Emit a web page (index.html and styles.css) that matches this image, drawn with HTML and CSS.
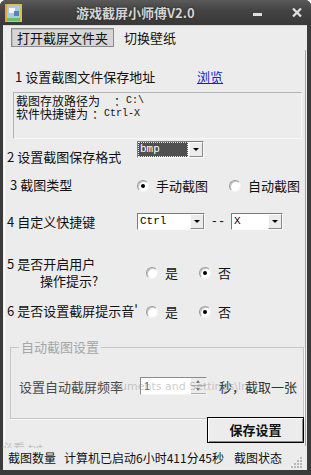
FILE: index.html
```html
<!DOCTYPE html>
<html lang="zh-CN">
<head>
    <meta charset="UTF-8">
    <title>游戏截屏小师傅V2.0</title>
    <link rel="stylesheet" href="styles.css">
</head>
<body>
<div class="window">
    <!-- Title bar -->
    <div class="titlebar">
        <svg class="app-icon" width="17" height="18" viewBox="0 0 17 18">
            <rect x="0" y="0" width="17" height="18" fill="#d9c24a"/>
            <rect x="2" y="2" width="13" height="12" fill="#a9c8e6"/>
            <rect x="4" y="4" width="6" height="5" fill="#f4f4f4"/>
            <rect x="9" y="7" width="5" height="5" fill="#5a7fc0"/>
            <rect x="2" y="14" width="13" height="3" fill="#6cbf5a"/>
            <rect x="0" y="0" width="2" height="18" fill="#e8a23a"/>
        </svg>
        <span class="title">游戏截屏小师傅V2.0</span>
        <span class="btn-min"></span>
        <svg class="btn-close" width="10" height="9" viewBox="0 0 10 9">
            <path d="M1 0.5 L9 8.5 M9 0.5 L1 8.5" stroke="#e2e2e2" stroke-width="2.2"/>
        </svg>
    </div>

    <div class="frame">
        <div class="client">
            <div class="tabs">
                <span class="tab-btn">打开截屏文件夹</span>
                <span class="tab-link">切换壁纸</span>
            </div>

            <div class="panel">
                <div class="row row-1">
                    <span class="label label-1">1 设置截图文件保存地址</span>
                    <a class="browse" href="#">浏览</a>
                </div>

                <div class="info">
                    <div class="info-line">截图存放路径为<span class="gap-3"></span>：<span class="mono">C:\</span></div>
                    <div class="info-line">软件快捷键为<span class="gap-1"></span>：<span class="mono">Ctrl-X</span></div>
                </div>

                <div class="row row-2">
                    <span class="label label-2">2 设置截图保存格式</span>
                    <span class="combo combo-fmt">
                        <span class="combo-value selected">bmp</span>
                        <span class="combo-arrow"></span>
                    </span>
                </div>

                <div class="row row-3">
                    <span class="label label-3">3 截图类型</span>
                    <span class="option"><span class="radio on"></span>手动截图</span>
                    <span class="option option-2"><span class="radio"></span>自动截图</span>
                </div>

                <div class="row row-4">
                    <span class="label label-2">4 自定义快捷键</span>
                    <span class="combo combo-mod">
                        <span class="combo-value">Ctrl</span>
                        <span class="combo-arrow"></span>
                    </span>
                    <span class="dash">--</span>
                    <span class="combo combo-key">
                        <span class="combo-value">X</span>
                        <span class="combo-arrow"></span>
                    </span>
                </div>

                <div class="row row-5">
                    <span class="label label-yn">
                        <span class="line">5 是否开启用户</span>
                        <span class="line line-indent">操作提示?</span>
                    </span>
                    <span class="option"><span class="radio"></span>是</span>
                    <span class="option option-no"><span class="radio on"></span>否</span>
                </div>

                <div class="row row-6">
                    <span class="label label-yn clip">6 是否设置截屏提示音'</span>
                    <span class="option"><span class="radio"></span>是</span>
                    <span class="option option-no"><span class="radio on"></span>否</span>
                </div>

                <fieldset class="group">
                    <legend>自动截图设置</legend>
                    <div class="group-row">
                        <span class="group-label">设置自动截屏频率</span>
                        <span class="spin">
                            <span class="spin-value">1</span>
                            <span class="spin-btns">
                                <span class="spin-up"></span>
                                <span class="spin-down"></span>
                            </span>
                        </span>
                        <span class="group-tail">秒，截取一张</span>
                    </div>
                </fieldset>

                <div class="save-row">
                    <span class="save-btn">保存设置</span>
                </div>
            </div>

            <div class="statusbar">
                <span>截图数量</span>
                <span class="status-time">计算机已启动6小时411分45秒</span>
                <span class="status-state">截图状态</span>
                <svg class="grip" width="12" height="12" viewBox="0 0 12 12">
                    <rect x="9" y="1" width="2" height="2" fill="#b8b8b8"/>
                    <rect x="6" y="4" width="2" height="2" fill="#b8b8b8"/>
                    <rect x="9" y="4" width="2" height="2" fill="#b8b8b8"/>
                    <rect x="3" y="7" width="2" height="2" fill="#b8b8b8"/>
                    <rect x="6" y="7" width="2" height="2" fill="#b8b8b8"/>
                    <rect x="9" y="7" width="2" height="2" fill="#b8b8b8"/>
                    <rect x="0" y="10" width="2" height="2" fill="#b8b8b8"/>
                    <rect x="3" y="10" width="2" height="2" fill="#b8b8b8"/>
                    <rect x="6" y="10" width="2" height="2" fill="#b8b8b8"/>
                    <rect x="9" y="10" width="2" height="2" fill="#b8b8b8"/>
                </svg>
            </div>

            <!-- leftover paint from the desktop behind the window -->
            <span class="ghost ghost-path">uments and Settings\ln</span>
            <span class="ghost ghost-file">必看.txt</span>
        </div>
    </div>
</div>
</body>
</html>
```

FILE: styles.css
```css
body {
    margin: 0;
    font-family: "Noto Sans CJK SC", sans-serif;
    font-size: 13px;
    color: #111;
}

.window {
    width: 311px;
    height: 475px;
    display: flex;
    flex-direction: column;
    background: #3b3b3b;
    border-radius: 6px 6px 0 0;
    overflow: hidden;
}

/* Title bar */
.titlebar {
    height: 25px;
    flex: none;
    display: flex;
    align-items: center;
    background: linear-gradient(#5a5a5a, #444 40%, #383838);
}
.app-icon {
    margin-left: 5px;
}
.title {
    margin-left: 54px;
    font-weight: bold;
    font-size: 13px;
    color: #d4d4d4;
    text-shadow: 0 0 2px #1e1e1e;
    line-height: 16px;
}
.btn-min {
    margin-left: auto;
    width: 9px;
    height: 3px;
    background: #dedede;
    margin-top: 4px;
}
.btn-close {
    margin-left: 30px;
    margin-right: 9px;
}

/* Window frame + client area */
.frame {
    flex: 1;
    display: flex;
    padding: 0 4px 5px 3px;
}
.client {
    flex: 1;
    position: relative;
    display: flex;
    flex-direction: column;
    background: #ececec;
    border-top: 1px solid #d8d8d8;
}

.tabs {
    display: flex;
    align-items: center;
    margin: 2px 0 0 8px;
    height: 19px;
}
.tab-btn {
    width: 103px;
    height: 19px;
    box-sizing: border-box;
    border: 1px solid #8a8a8a;
    background: #d6d6d6;
    box-shadow: inset 1px 1px #bdbdbd;
    text-align: center;
    line-height: 17px;
}
.tab-link {
    margin-left: 10px;
    line-height: 16px;
}

.panel {
    flex: 1;
    margin: 3px 1px 0 1px;
    border-left: 1px solid #fcfcfc;
    border-right: 1px solid #a8a8a8;
    display: flex;
    flex-direction: column;
}

.row {
    display: flex;
    align-items: center;
    line-height: 16px;
}
.label {
    flex: none;
}

.row-1 {
    margin: 19px 0 0 10px;
    height: 16px;
}
.label-1 {
    width: 182px;
}
.browse {
    color: #1c1cd0;
    text-decoration: underline;
}

.info {
    margin: 7px 0 0 8px;
    width: 289px;
    height: 47px;
    box-sizing: border-box;
    border: 1px solid;
    border-color: #b4b4b4 #f8f8f8 #f8f8f8 #b4b4b4;
    padding: 1px 0 0 2px;
    font-size: 12px;
    line-height: 13px;
}
.info-line {
    display: flex;
    align-items: center;
    height: 13px;
}
.gap-3 {
    width: 14px;
}
.gap-1 {
    width: 4px;
}
.mono {
    font-family: "Liberation Mono", monospace;
    font-size: 10px;
}

.row-2 {
    margin: 2px 0 0 2px;
    height: 24px;
    align-items: flex-start;
}
.label-2 {
    width: 130px;
    margin-top: 8px;
}
.row-4 {
    margin: 20px 0 0 2px;
    height: 17px;
}
.row-4 .label-2 {
    margin-top: 1px;
}

.row-3 {
    margin: 12px 0 0 5px;
    height: 16px;
}
.label-3 {
    width: 127px;
}

/* Fake combo boxes */
.combo {
    flex: none;
    display: flex;
    height: 17px;
    box-sizing: border-box;
    border: 1px solid;
    border-color: #7c7c7c #fafafa #fafafa #7c7c7c;
    background: #fff;
}
.combo-fmt {
    width: 67px;
}
.combo-mod {
    width: 68px;
}
.combo-key {
    width: 52px;
}
.combo-value {
    flex: 1;
    font-family: "Liberation Mono", monospace;
    font-size: 11px;
    line-height: 15px;
    padding-left: 2px;
    color: #000;
}
.combo-value.selected {
    background: #505050;
    color: #fff;
    outline: 1px dotted #e8e8e8;
    outline-offset: -1px;
    margin: 0 1px 0 0;
    line-height: 15px;
}
.combo-arrow {
    width: 14px;
    flex: none;
    box-sizing: border-box;
    border: 1px solid;
    border-color: #fdfdfd #8a8a8a #8a8a8a #fdfdfd;
    background: #ececec;
    position: relative;
}
.combo-arrow::after {
    content: "";
    position: absolute;
    left: 3px;
    top: 5px;
    border-left: 3px solid transparent;
    border-right: 3px solid transparent;
    border-top: 3px solid #000;
}
.dash {
    width: 26px;
    text-align: center;
    font-family: "Liberation Mono", monospace;
    font-size: 12px;
}

/* Radio options */
.option {
    display: flex;
    align-items: center;
    flex: none;
    margin-top: 2px;
}
.option-2 {
    margin-left: 21px;
}
.radio {
    width: 12px;
    height: 12px;
    box-sizing: border-box;
    border-radius: 50%;
    border: 1px solid;
    border-color: #9a9a9a #f4f4f4 #f4f4f4 #9a9a9a;
    box-shadow: inset 1px 1px #c4c4c4;
    background: #fff;
    position: relative;
    margin-right: 7px;
}
.radio.on::after {
    content: "";
    position: absolute;
    left: 3px;
    top: 3px;
    width: 4px;
    height: 4px;
    border-radius: 50%;
    background: #000;
}

.row-5 {
    margin: 25px 0 0 2px;
    height: 34px;
}
.row-6 {
    margin: 14px 0 0 2px;
    height: 16px;
}
.label-yn {
    width: 139px;
    display: flex;
    flex-direction: column;
    line-height: 17px;
}
.line-indent {
    padding-left: 33px;
}
.clip {
    width: 137px;
    margin-right: 2px;
    white-space: nowrap;
    overflow: hidden;
    line-height: 16px;
}
.option-no {
    margin-left: 21px;
}

/* Group box */
.group {
    margin: 20px 0 0 5px;
    width: 294px;
    height: 80px;
    box-sizing: border-box;
    padding: 0 0 0 8px;
    border: 1px solid #c6c6c6;
    box-shadow: 1px 1px #fafafa;
}
.group legend {
    padding: 0 2px;
    color: #a6a6a6;
    line-height: 16px;
}
.group-row {
    display: flex;
    align-items: center;
    margin-top: 22px;
    height: 18px;
}
.group-label {
    width: 121px;
    color: #4a4a4a;
}
.spin {
    width: 67px;
    height: 18px;
    box-sizing: border-box;
    display: flex;
    border: 1px solid;
    border-color: #8c8c8c #f4f4f4 #f4f4f4 #8c8c8c;
    background: #fff;
}
.spin-value {
    flex: 1;
    padding-left: 3px;
    font-size: 11px;
    line-height: 16px;
    color: #666;
    font-family: "Liberation Sans", sans-serif;
}
.spin-btns {
    width: 15px;
    display: flex;
    flex-direction: column;
}
.spin-up, .spin-down {
    flex: 1;
    position: relative;
    background: #ececec;
    border-bottom: 1px solid #b0b0b0;
}
.spin-up::after, .spin-down::after {
    content: "";
    position: absolute;
    left: 5px;
    top: 2px;
    border-left: 2px solid transparent;
    border-right: 2px solid transparent;
}
.spin-up::after {
    border-bottom: 3px solid #777;
}
.spin-down::after {
    border-top: 3px solid #777;
}
.group-tail {
    margin-left: 12px;
    color: #333;
}

/* Save button */
.save-row {
    display: flex;
    margin: -2px 0 0 202px;
}
.save-btn {
    width: 97px;
    height: 26px;
    box-sizing: border-box;
    border: 1px solid #000;
    box-shadow: inset 1px 1px #fff, inset -1px -1px #8a8a8a;
    background: #ececec;
    text-align: center;
    font-weight: bold;
    line-height: 24px;
}

/* Status bar */
.statusbar {
    height: 24px;
    flex: none;
    display: flex;
    align-items: center;
    padding-left: 5px;
    font-size: 12px;
    line-height: 16px;
}
.status-time {
    margin-left: 8px;
}
.status-state {
    margin-left: 10px;
}
.grip {
    margin-left: auto;
    margin-right: 4px;
    margin-top: 8px;
}

/* Faint leftovers painted over the dialog */
.ghost {
    position: absolute;
    white-space: nowrap;
    pointer-events: none;
}
.ghost-path {
    left: 117px;
    top: 353px;
    font-family: "DejaVu Sans", sans-serif;
    font-size: 11px;
    line-height: 16px;
    color: rgba(140, 140, 140, 0.45);
}
.ghost-file {
    left: -2px;
    top: 412px;
    height: 10px;
    overflow: hidden;
    font-size: 12px;
    line-height: 20px;
    color: rgba(150, 150, 150, 0.5);
}
```
